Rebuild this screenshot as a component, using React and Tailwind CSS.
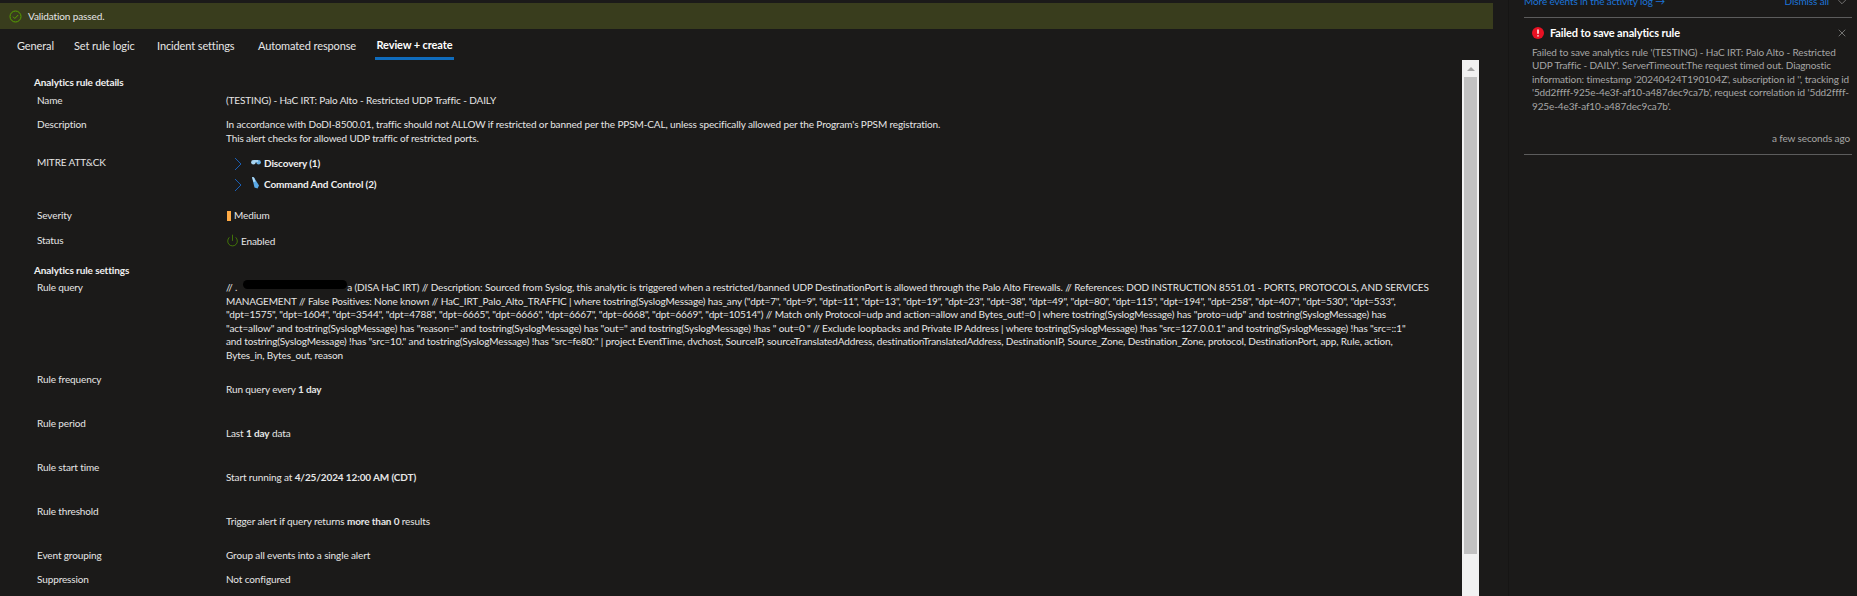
import React from "react";
import { X, ChevronDown, Power } from "lucide-react";

const Row = ({ label, className, valueClass = "", children }) => (
  <div className={`flex ${className}`}>
    <div className="w-[226px] shrink-0 pl-[37px]">{label}</div>
    <div className={`flex-1 ${valueClass}`}>{children}</div>
  </div>
);

const Tab = ({ children, active, className = "" }) => (
  <div className={`h-[31px] text-center whitespace-nowrap ${className} ${active ? "border-b-[3px] border-[#0f6cbd] font-bold text-white pt-[8px]" : "pt-[9px]"}`}>
    {children}
  </div>
);

const Tactic = ({ icon, children }) => (
  <div className="flex items-center h-[21px]">
    <svg width="8" height="14" viewBox="0 0 8 14" fill="none" className="ml-[8px] mr-[9px]">
      <path d="M1 1l6 6-6 6" stroke="#1b5fb4" />
    </svg>
    <span className="w-[13px] mb-[4px]">{icon}</span>
    <span className="font-bold text-[#f0f0f0]">{children}</span>
  </div>
);

export default function App() {
  return (
    <div className="font-['Lato',sans-serif] flex w-[1857px] h-[596px] overflow-hidden bg-[#1b1a19] text-[10px] tracking-[-0.12px] leading-[15px] text-[#e6e6e6]">
      {/* main blade */}
      <div className="w-[1493px] shrink-0 pt-[3px]">
        <div className="h-[26px] bg-[#393d1d] flex items-center pl-[9px]">
          <svg width="13" height="13" viewBox="0 0 13 13" fill="none" className="mr-[6px]">
            <circle cx="6.5" cy="6.5" r="5.5" stroke="#57a300" />
            <path d="M4 6.7l1.8 1.8L9.2 5" stroke="#57a300" />
          </svg>
          <span>Validation passed.</span>
        </div>

        <div className="flex pl-[17px] h-[31px] text-[11px]">
          <Tab className="w-[35px] mr-[22px]">General</Tab>
          <Tab className="w-[60px] mr-[23px]">Set rule logic</Tab>
          <Tab className="w-[77px] mr-[24px]">Incident settings</Tab>
          <Tab className="w-[96px] mr-[21px]">Automated response</Tab>
          <Tab className="w-[79px]" active>Review + create</Tab>
        </div>

        <div className="flex">
          <div className="w-[1462px] shrink-0 pt-[15px]">
            <div className="pl-[34px] font-bold text-[#f0f0f0] h-[18px]">Analytics rule details</div>
            <Row label="Name" className="h-[24px]">(TESTING) - HaC IRT: Palo Alto - Restricted UDP Traffic - DAILY</Row>
            <Row label="Description" className="h-[38px]" valueClass="leading-[14px]">
              In accordance with DoDI-8500.01, traffic should not ALLOW if restricted or banned per the PPSM-CAL, unless specifically allowed per the Program's PPSM registration.<br />
              This alert checks for allowed UDP traffic of restricted ports.
            </Row>
            <Row label="MITRE ATT&CK" className="h-[53px]" valueClass="-mt-[2px]">
              <Tactic icon={
                <svg width="10" height="6" viewBox="0 0 10 6">
                  <circle cx="2.4" cy="3.2" r="2.3" fill="#a8d4f0" />
                  <circle cx="7.6" cy="3.2" r="2.3" fill="#6bb2e4" />
                  <rect x="3" y="1" width="4" height="2" fill="#a8d4f0" />
                </svg>
              }>Discovery (1)</Tactic>
              <Tactic icon={
                <svg width="9" height="12" viewBox="0 0 9 12">
                  <path d="M1 0l2 .5 5 8-1.5 3-3-1z" fill="#5aa9e6" />
                  <path d="M1 0l2 .5 1.5 4-2 .5z" fill="#b5dcf5" />
                </svg>
              }>Command And Control (2)</Tactic>
            </Row>
            <Row label="Severity" className="h-[25px]">
              <div className="flex items-center h-[15px] pl-[1px]">
                <span className="w-[4px] h-[10px] bg-[#ffaa44] mr-[3px]" />
                Medium
              </div>
            </Row>
            <Row label="Status" className="h-[30px]">
              <div className="flex items-center h-[15px] mt-[1px]">
                <Power size={13} strokeWidth={1.2} className="text-[#57a300] mr-[2px] mb-[2px]" />
                Enabled
              </div>
            </Row>
            <div className="pl-[34px] font-bold text-[#f0f0f0] h-[17px]">Analytics rule settings</div>
            <Row label="Rule query" className="h-[92px]" valueClass="leading-[13.5px] pt-[1px] whitespace-nowrap">
              <span className="relative">
                // .<span className="inline-block w-[110px]" />a (DISA HaC IRT) // Description: Sourced from Syslog, this analytic is triggered when a restricted/banned UDP DestinationPort is allowed through the Palo Alto Firewalls. // References: DOD INSTRUCTION 8551.01 - PORTS, PROTOCOLS, AND SERVICES<br />
                MANAGEMENT // False Positives: None known // HaC_IRT_Palo_Alto_TRAFFIC | where tostring(SyslogMessage) has_any ("dpt=7", "dpt=9", "dpt=11", "dpt=13", "dpt=19", "dpt=23", "dpt=38", "dpt=49", "dpt=80", "dpt=115", "dpt=194", "dpt=258", "dpt=407", "dpt=530", "dpt=533",<br />
                "dpt=1575", "dpt=1604", "dpt=3544", "dpt=4788", "dpt=6665", "dpt=6666", "dpt=6667", "dpt=6668", "dpt=6669", "dpt=10514") // Match only Protocol=udp and action=allow and Bytes_out!=0 | where tostring(SyslogMessage) has "proto=udp" and tostring(SyslogMessage) has<br />
                "act=allow" and tostring(SyslogMessage) has "reason=" and tostring(SyslogMessage) has "out=" and tostring(SyslogMessage) !has " out=0 " // Exclude loopbacks and Private IP Address | where tostring(SyslogMessage) !has "src=127.0.0.1" and tostring(SyslogMessage) !has "src=::1"<br />
                and tostring(SyslogMessage) !has "src=10." and tostring(SyslogMessage) !has "src=fe80:" | project EventTime, dvchost, SourceIP, sourceTranslatedAddress, destinationTranslatedAddress, DestinationIP, Source_Zone, Destination_Zone, protocol, DestinationPort, app, Rule, action,<br />
                Bytes_in, Bytes_out, reason
                <span className="absolute left-[17px] top-[-1px] w-[104px] h-[9px] bg-black rounded-full" />
              </span>
            </Row>
            <Row label="Rule frequency" className="h-[44px]" valueClass="pt-[10px]">Run query every <b className="font-bold">1 day</b></Row>
            <Row label="Rule period" className="h-[44px]" valueClass="pt-[10px]">Last <b className="font-bold">1 day</b> data</Row>
            <Row label="Rule start time" className="h-[44px]" valueClass="pt-[10px]">Start running at <b className="font-bold">4/25/2024 12:00 AM (CDT)</b></Row>
            <Row label="Rule threshold" className="h-[44px]" valueClass="pt-[10px]">Trigger alert if query returns <b className="font-bold">more than 0</b> results</Row>
            <Row label="Event grouping" className="h-[24px]">Group all events into a single alert</Row>
            <Row label="Suppression" className="h-[24px]">Not configured</Row>
          </div>

          {/* scrollbar */}
          <div className="w-[17px] h-[536px] bg-[#f1f1f1] flex flex-col items-center">
            <div className="h-[17px] flex items-center justify-center">
              <div className="w-0 h-0 border-x-[4px] border-x-transparent border-b-[4px] border-b-[#a3a3a3]" />
            </div>
            <div className="w-[13px] h-[477px] bg-[#c1c1c1]" />
          </div>
        </div>
      </div>

      {/* notifications panel */}
      <div className="flex-1 ml-[15px] -mt-[6px] pl-[15px] pr-[5px] border-l border-[#161514]">
        <div className="h-[23px] flex justify-between text-[#1b74d8]">
          <span>More events in the activity log →</span>
          <span className="flex items-center h-[15px] pr-[3px]">
            Dismiss all
            <ChevronDown size={14} strokeWidth={1} className="text-[#b0b0b0] ml-[6px]" />
          </span>
        </div>
        <div className="border-t border-b border-[#5c5c5c] h-[138px] pl-[8px] pr-[1px] pt-[7px]">
          <div className="flex items-center h-[15px]">
            <svg width="12" height="12" viewBox="0 0 12 12" className="mr-[6px]">
              <circle cx="6" cy="6" r="6" fill="#e81123" />
              <path d="M6 2.5v4.2M6 8.2v1.3" stroke="#fff" strokeWidth="1.5" />
            </svg>
            <span className="font-bold text-white flex-1 text-[11px]">Failed to save analytics rule</span>
            <X size={12} strokeWidth={1} className="text-[#c8c8c8] mr-[3px]" />
          </div>
          <div className="mt-[6px] text-[#a6a6a6] leading-[13.4px] whitespace-nowrap">
            Failed to save analytics rule '(TESTING) - HaC IRT: Palo Alto - Restricted<br />
            UDP Traffic - DAILY'. ServerTimeout:The request timed out. Diagnostic<br />
            information: timestamp '20240424T190104Z', subscription id '', tracking id<br />
            '5dd2ffff-925e-4e3f-af10-a487dec9ca7b', request correlation id '5dd2ffff-<br />
            925e-4e3f-af10-a487dec9ca7b'.
          </div>
          <div className="mt-[18px] text-right text-[#a6a6a6] pr-[1px]">a few seconds ago</div>
        </div>
      </div>
    </div>
  );
}
